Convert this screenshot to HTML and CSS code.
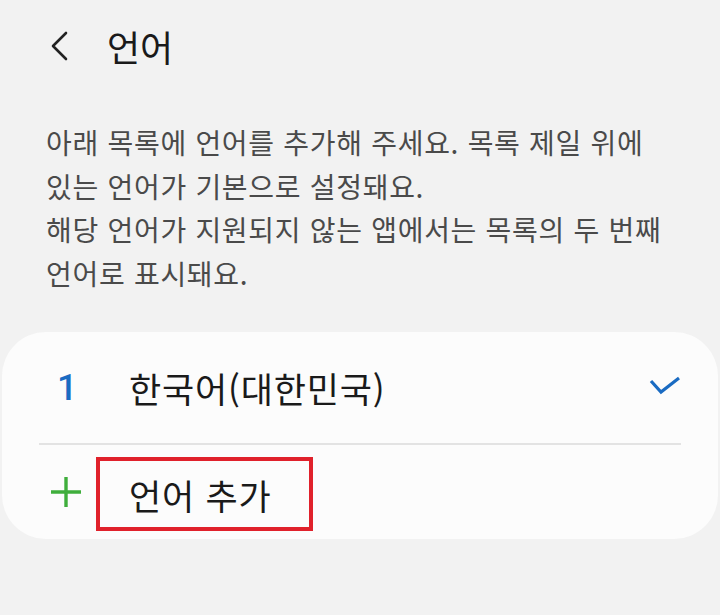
FILE: index.html
```html
<!DOCTYPE html>
<html lang="ko">
<head>
    <meta charset="UTF-8">
    <meta name="viewport" content="width=device-width, initial-scale=1.0">
    <title>언어</title>
    <link rel="stylesheet" href="styles.css">
</head>
<body>
    <div class="header">
        <button class="back-btn" aria-label="뒤로">
            <svg width="20" height="30" viewBox="0 0 20 30">
                <path d="M17 2 L4 15 L17 28" fill="none" stroke="#222" stroke-width="2.6" stroke-linecap="round" stroke-linejoin="round"/>
            </svg>
        </button>
        <div class="title">언어</div>
    </div>

    <p class="description">
        아래 목록에 언어를 추가해 주세요. 목록 제일 위에<br>
        있는 언어가 기본으로 설정돼요.<br>
        해당 언어가 지원되지 않는 앱에서는 목록의 두 번째<br>
        언어로 표시돼요.
    </p>

    <div class="card">
        <div class="row row-lang">
            <div class="lead"><span class="order">1</span></div>
            <div class="label">한국어(대한민국)</div>
            <svg class="check" width="32" height="22" viewBox="0 0 32 22">
                <path d="M2 5 L12 16 L30 2" fill="none" stroke="#1a6bc2" stroke-width="3.2"/>
            </svg>
        </div>
        <div class="divider"></div>
        <div class="row row-add">
            <div class="lead">
                <svg class="plus" width="30" height="30" viewBox="0 0 30 30">
                    <path d="M15 0 V30 M0 15 H30" stroke="#3fae3c" stroke-width="3.4"/>
                </svg>
            </div>
            <div class="label highlight">언어 추가</div>
        </div>
    </div>
</body>
</html>
```

FILE: styles.css
```css
body {
    margin: 0;
    background: #f2f2f2;
    font-family: "Noto Sans CJK KR", "Noto Sans", sans-serif;
    color: #1c1c1c;
}
.header {
    display: flex;
    align-items: center;
    height: 92px;
    padding-left: 49px;
}
.back-btn {
    background: none;
    border: none;
    padding: 0;
    width: 20px;
    height: 30px;
    display: flex;
}
.title {
    margin-left: 38px;
    font-size: 36px;
    line-height: 1;
    color: #1a1a1a;
}
.description {
    margin: 29px 0 0;
    padding: 0 46px;
    font-size: 28px;
    letter-spacing: 0.7px;
    line-height: 43.5px;
    color: #4a4a4a;
}
.card {
    margin: 37px 2px 0;
    background: #fcfcfc;
    border-radius: 44px;
}
.row {
    display: flex;
    align-items: center;
    padding: 0 37px;
}
.row-lang {
    height: 111px;
}
.row-add {
    height: 94px;
}
.lead {
    width: 57px;
    display: flex;
    align-items: center;
}
.order {
    margin-left: 18px;
    font-family: Roboto, "Noto Sans", sans-serif;
    font-weight: 500;
    font-size: 36px;
    line-height: 1;
    color: #1a6bc2;
}
.plus {
    margin-left: 12px;
}
.label {
    font-size: 35px;
    letter-spacing: 0.8px;
    line-height: 1;
    padding-left: 33px;
    color: #1a1a1a;
}
.row-lang .label {
    flex: 1;
}
.check {
    margin-top: -2px;
}
.divider {
    margin: 0 37px;
    height: 2px;
    background: #e3e3e3;
}
.highlight {
    border: 4px solid #e0212b;
    padding: 0 37px 0 29px;
    height: 66px;
    display: flex;
    align-items: center;
    margin-top: 4px;
}
```
